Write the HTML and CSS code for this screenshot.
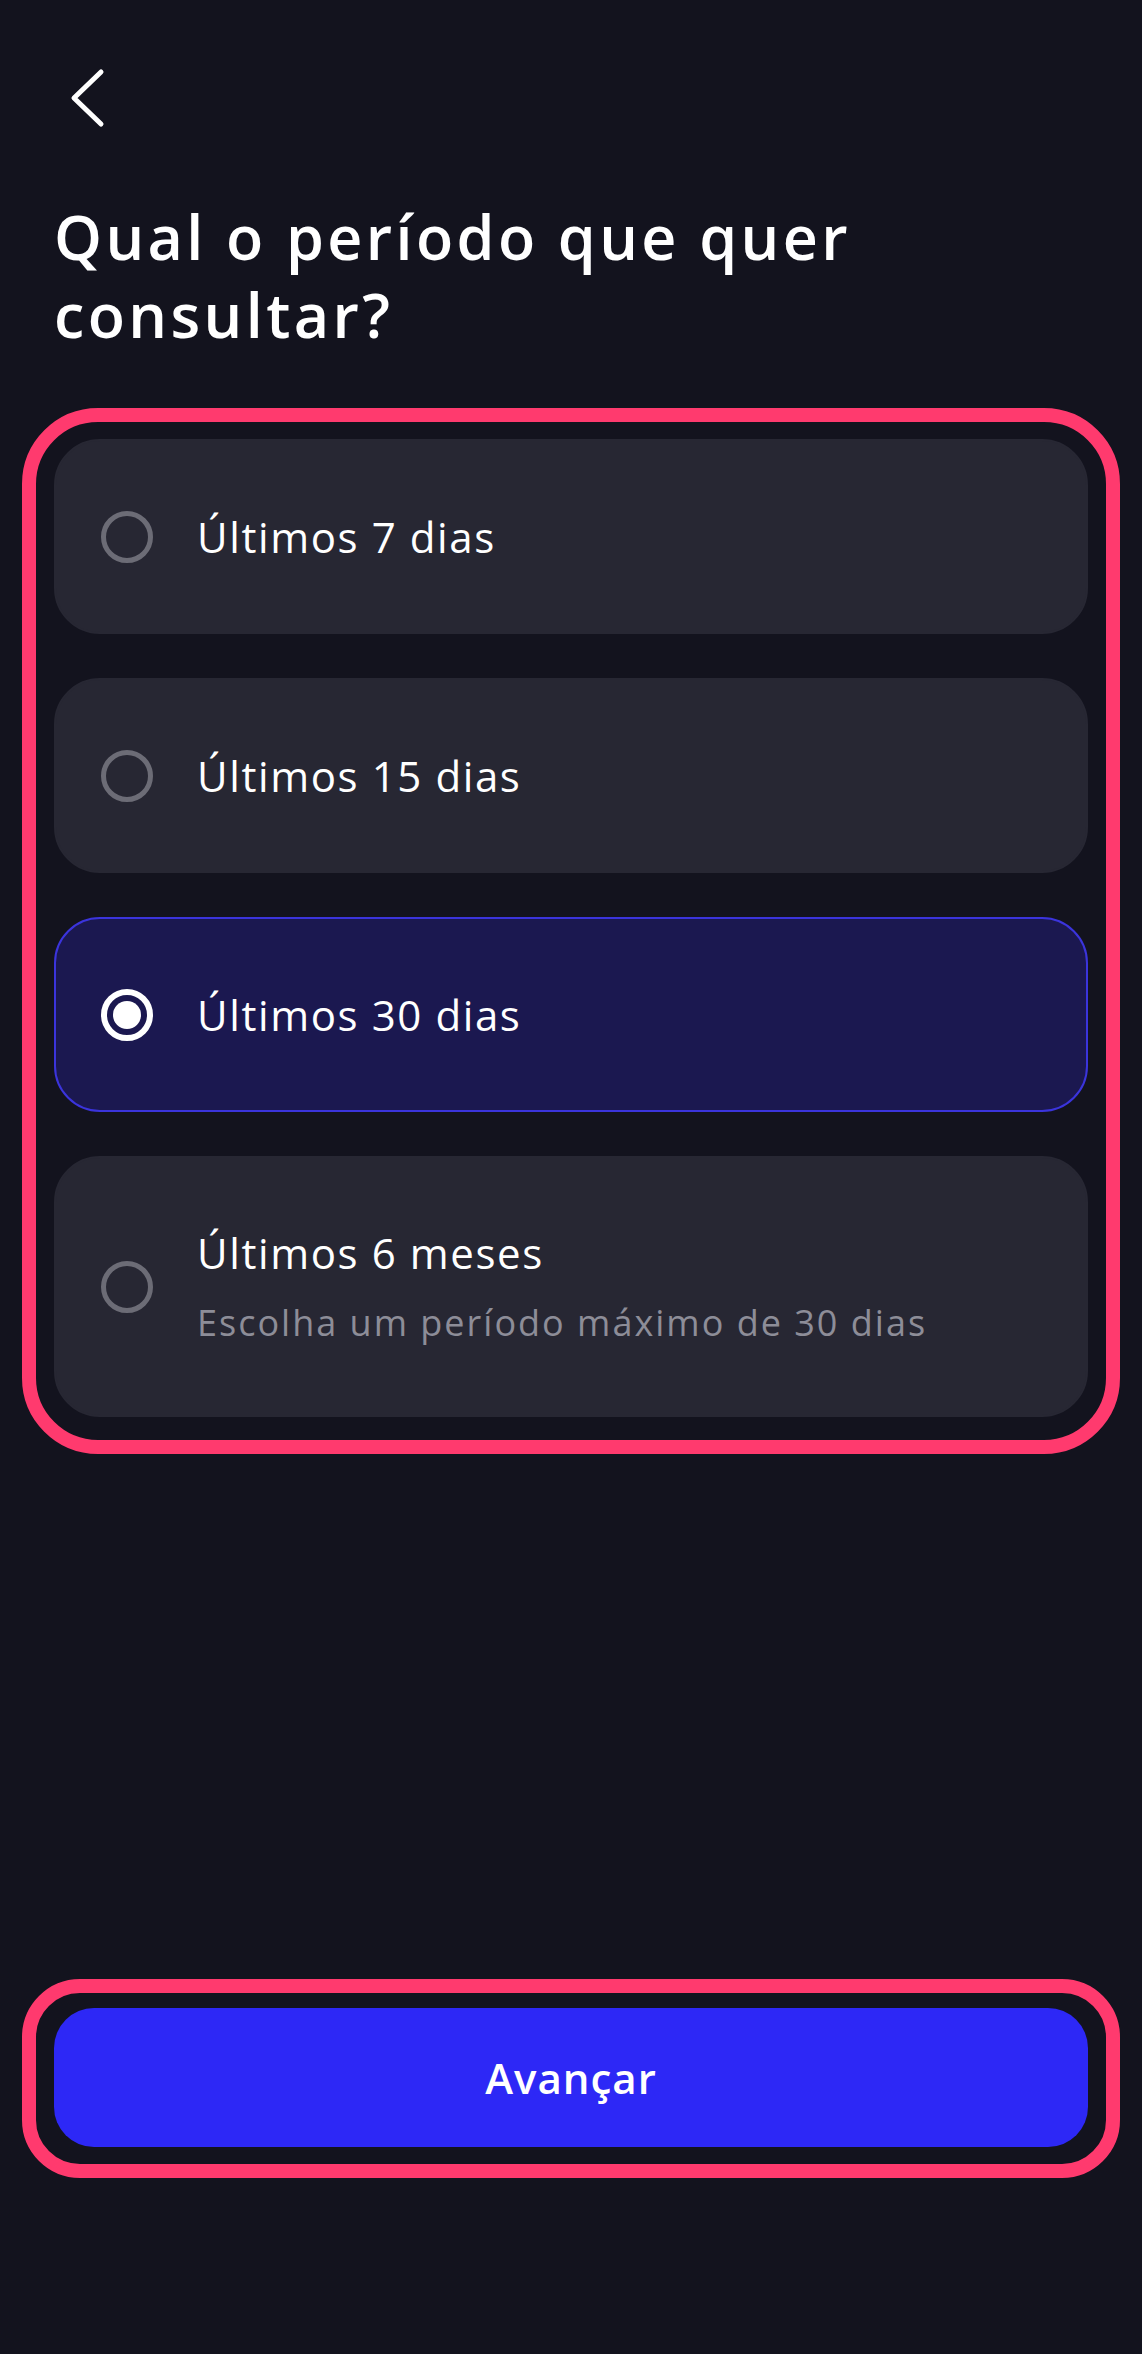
FILE: index.html
```html
<!DOCTYPE html>
<html lang="pt-BR">
<head>
<meta charset="utf-8">
<title>Período</title>
<link rel="stylesheet" href="styles.css">
</head>
<body>
<div class="screen">
  <header class="topbar">
    <button class="back" aria-label="Voltar">
      <svg viewBox="0 0 40 60" width="40" height="60"><path d="M31 4 L4 30 L31 56" fill="none" stroke="#ffffff" stroke-width="5" stroke-linecap="round" stroke-linejoin="round"/></svg>
    </button>
  </header>
  <h1 class="title">Qual o período que quer consultar?</h1>
  <div class="highlight options">
    <label class="option">
      <span class="radio"></span>
      <span class="label">Últimos 7 dias</span>
    </label>
    <label class="option">
      <span class="radio"></span>
      <span class="label">Últimos 15 dias</span>
    </label>
    <label class="option selected">
      <span class="radio"></span>
      <span class="label">Últimos 30 dias</span>
    </label>
    <label class="option tall">
      <span class="radio"></span>
      <span class="texts">
        <span class="label">Últimos 6 meses</span>
        <span class="sub">Escolha um período máximo de 30 dias</span>
      </span>
    </label>
  </div>
  <div class="footer">
    <div class="highlight btnwrap">
      <button class="primary">Avançar</button>
    </div>
  </div>
</div>
</body>
</html>
```

FILE: styles.css
```css
html, body {
  margin: 0;
  padding: 0;
  background: #13131e;
}
body {
  font-family: "Open Sans", "Noto Sans", sans-serif;
  color: #ffffff;
}
.screen {
  min-height: 2354px;
  box-sizing: border-box;
  display: flex;
  flex-direction: column;
  padding: 0 54px;
}
.topbar {
  padding-top: 68px;
  height: 62px;
}
.back {
  background: none;
  border: 0;
  padding: 0;
  margin-left: 16px;
  width: 40px;
  height: 60px;
  display: block;
}
.back svg { display: block; }
.title {
  margin: 68px 0 0 0;
  font-size: 61px;
  line-height: 78px;
  font-weight: 600;
  letter-spacing: 3.4px;
  width: 920px;
}
.highlight {
  border: 14px solid #ff3a6e;
  margin-left: -32px;
  margin-right: -32px;
}
.options {
  margin-top: 54px;
  border-radius: 76px;
  padding: 17px 18px 23px;
  display: flex;
  flex-direction: column;
  gap: 44px;
}
.option {
  display: flex;
  align-items: center;
  gap: 44px;
  height: 195px;
  box-sizing: border-box;
  padding-left: 45px;
  background: #272733;
  border-radius: 46px;
  border: 2px solid #272733;
}
.option.tall { height: 261px; }
.radio {
  width: 52px;
  height: 52px;
  box-sizing: border-box;
  border: 5px solid #6c6c76;
  border-radius: 50%;
  flex: none;
  position: relative;
}
.selected {
  background: #1b1850;
  border-color: #3b34dc;
}
.selected .radio {
  border: 6px solid #ffffff;
}
.selected .radio::after {
  content: "";
  position: absolute;
  left: 6px;
  top: 6px;
  width: 28px;
  height: 28px;
  border-radius: 50%;
  background: #ffffff;
}
.label {
  font-size: 42px;
  line-height: 50px;
  font-weight: 500;
  letter-spacing: 1.6px;
  color: #ffffff;
}
.texts {
  display: flex;
  flex-direction: column;
  gap: 23px;
}
.sub {
  font-size: 36px;
  line-height: 44px;
  color: #8d8d98;
  letter-spacing: 2px;
}
.footer {
  margin-top: auto;
  padding-bottom: 176px;
}
.btnwrap {
  border-radius: 58px;
  padding: 15px 18px 17px;
}
.primary {
  display: block;
  width: 100%;
  height: 139px;
  border: 0;
  border-radius: 40px;
  background: #2d28f6;
  color: #ffffff;
  font-family: "Open Sans", "Noto Sans", sans-serif;
  font-size: 42px;
  font-weight: 600;
  letter-spacing: 1px;
}
```
